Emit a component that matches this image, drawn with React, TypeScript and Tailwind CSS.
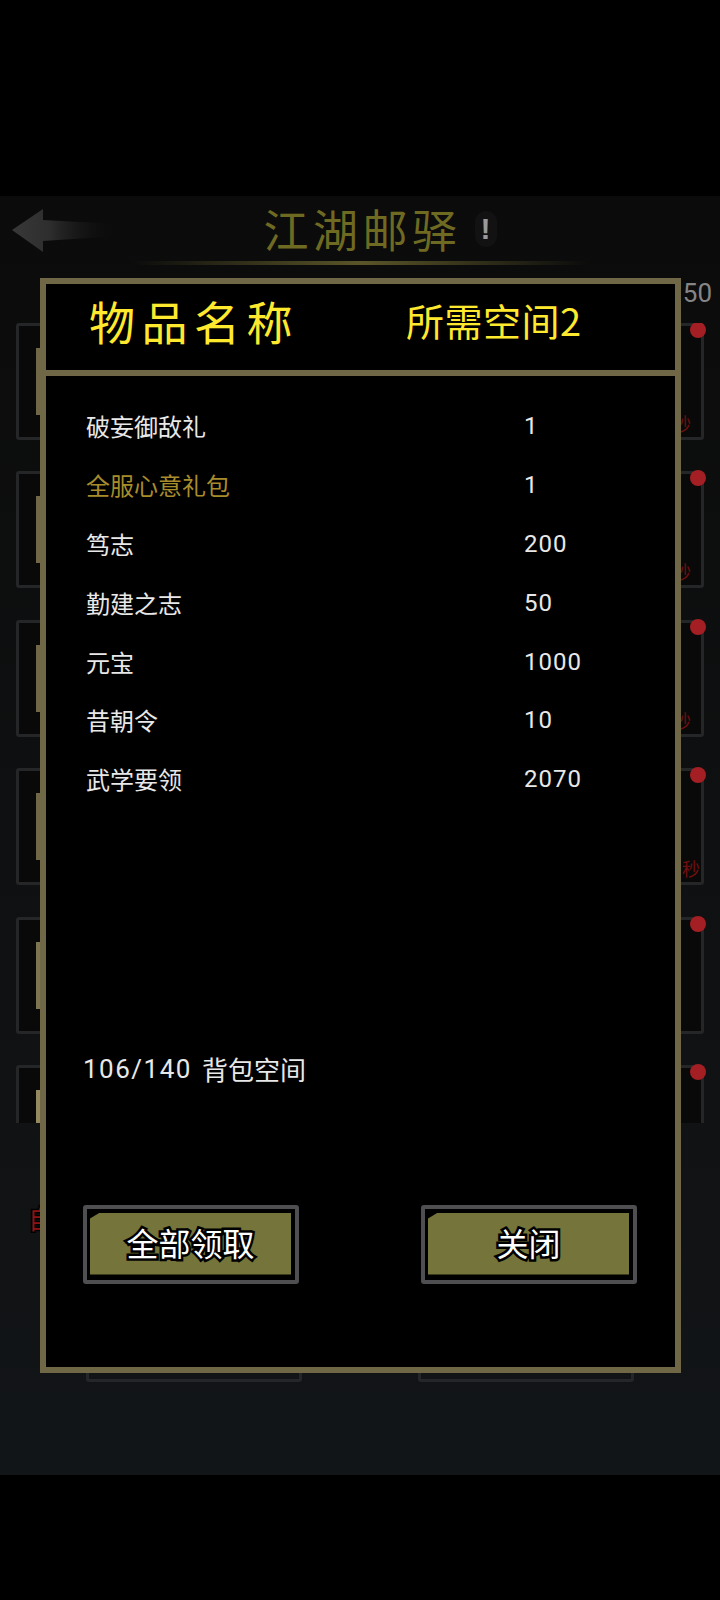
const items: [string, string, boolean][] = [
  ["破妄御敌礼", "1", false],
  ["全服心意礼包", "1", true],
  ["笃志", "200", false],
  ["勤建之志", "50", false],
  ["元宝", "1000", false],
  ["昔朝令", "10", false],
  ["武学要领", "2070", false],
];

const cards: { timer: string; pad: string; bar: string }[] = [
  { timer: "秒", pad: "pr-[10px]", bar: "bg-[#6f6745]" },
  { timer: "秒", pad: "pr-[10px]", bar: "bg-[#6f6745]" },
  { timer: "秒", pad: "pr-[10px]", bar: "bg-[#6f6745]" },
  { timer: "秒", pad: "pr-[1px]", bar: "bg-[#6f6745]" },
  { timer: "", pad: "", bar: "bg-[#7d7552]" },
  { timer: "", pad: "", bar: "bg-[#94895f]" },
];

function ModalButton({ label }: { label: string }) {
  return (
    <button className="w-[216px] h-[79px] bg-black border-4 border-[#4f4f52] rounded-[3px] pl-[3px] pr-[4px] pt-[4px] pb-[5px]">
      <span className="flex items-center justify-center w-full h-full bg-[#75743a] [clip-path:polygon(10px_0,100%_0,100%_100%,0_100%,0_6px)]">
        <span className="text-[32px] leading-none -mt-[4px] text-white [-webkit-text-stroke:5px_#000] [paint-order:stroke_fill]">
          {label}
        </span>
      </span>
    </button>
  );
}

export default function App() {
  return (
    <div className="w-[720px] h-[1600px] bg-black flex flex-col font-['Noto_Sans_CJK_SC','Noto_Sans',sans-serif] overflow-hidden">
      <div className="h-[196px] shrink-0 bg-black" />

      <main className="relative h-[1279px] shrink-0 flex flex-col bg-gradient-to-b from-[#0b0b0b] to-[#121517]">
        <header className="h-[127px] shrink-0 relative flex flex-col">
          <div className="flex items-center justify-center h-[65px] relative">
            <svg
              viewBox="0 0 120 50"
              className="absolute left-[8px] top-[8px] w-[120px] h-[50px]"
            >
              <defs>
                <linearGradient id="arrowFill" x1="0" x2="1" y1="0" y2="0">
                  <stop offset="0" stopColor="#383838" />
                  <stop offset="0.35" stopColor="#2e2e2e" />
                  <stop offset="1" stopColor="#0b0b0b" stopOpacity="0" />
                </linearGradient>
              </defs>
              <path
                d="M4 26 L35 5 L35 16 L110 20 L110 32 L35 37 L35 48 Z"
                fill="url(#arrowFill)"
              />
            </svg>
            <h1 className="ml-[40px] text-[45px] leading-none tracking-[4.5px] font-normal text-[#6f6a22]">
              江湖邮驿
            </h1>
            <span className="ml-[13px] w-[22px] h-[36px] rounded-full bg-[#121212] flex items-center justify-center text-[30px] leading-none font-['Liberation_Sans',sans-serif] font-bold text-[#9a9a9a]">
              !
            </span>
          </div>
          <div className="ml-[133px] w-[455px] h-[4px] bg-gradient-to-r from-transparent via-[#5a5528] to-transparent" />
          <div className="flex justify-end pr-[8px] mt-[13px] text-[26px] leading-[30px] text-[#858585] font-['Roboto',sans-serif]">
            50
          </div>
        </header>

        <div className="h-[800px] shrink-0 overflow-hidden flex flex-col gap-[31.4px] pl-[16px] pr-[16px]">
          {cards.map((card, i) => (
            <div
              key={i}
              className="relative h-[117px] shrink-0 bg-[#090909] border-[3px] border-[#242628] rounded-[3px] flex items-center"
            >
              <div className={`ml-[17px] w-[6px] h-[67px] ${card.bar}`} />
              {card.timer && (
                <div
                  className={`absolute right-0 bottom-[2px] ${card.pad} text-[18px] leading-[24px] text-[#6f1010]`}
                >
                  {card.timer}
                </div>
              )}
              <div className="absolute -top-[4px] -right-[5px] w-[16px] h-[16px] rounded-full bg-[#a31f24]" />
            </div>
          ))}
        </div>

        <div className="absolute left-[28px] top-[1007px] text-[26px] leading-[30px] text-[#8c1414] [-webkit-text-stroke:3px_#000] [paint-order:stroke_fill]">
          自
        </div>

        <div className="flex justify-between pl-[86px] pr-[86px] mt-[189px]">
          <div className="w-[216px] h-[70px] border-[3px] border-[#242628] rounded-[3px]" />
          <div className="w-[216px] h-[70px] border-[3px] border-[#242628] rounded-[3px]" />
        </div>

        {/* modal */}
        <section className="absolute left-[40px] top-[82px] w-[641px] h-[1095px] bg-black border-[6px] border-[#6f6745] flex flex-col">
          <div className="h-[86px] shrink-0 flex items-center pl-[43px] text-[#ffe92e] font-normal">
            <div className="w-[317px] text-[46px] leading-none tracking-[6.5px] -mt-[14px]">物品名称</div>
            <div className="text-[38px] leading-none tracking-[0.5px] -mt-[14px]">所需空间2</div>
          </div>
          <div className="h-[6px] shrink-0 bg-[#6f6745]" />

          <div className="pt-[21px] pl-[40px] flex flex-col">
            {items.map(([name, value, gold]) => (
              <div
                key={name}
                className={`h-[58.8px] flex items-center text-[24px] leading-none ${gold ? "text-[#a88c2c]" : "text-[#e8e8e8]"}`}
              >
                <span className="w-[438px] shrink-0">{name}</span>
                <span className="text-[#e8e8e8] tracking-[1px] font-['Roboto',sans-serif]">{value}</span>
              </div>
            ))}
            <div className="mt-[242px] h-[36px] -ml-[3px] flex items-center text-[26px] leading-none text-[#e8e8e8]">
              <span className="font-['Roboto',sans-serif] tracking-[1.5px]">106/140</span>
              <span className="ml-[10px]">背包空间</span>
            </div>
          </div>

          <div className="mt-[118px] flex justify-between pl-[37px] pr-[38px]">
            <ModalButton label="全部领取" />
            <ModalButton label="关闭" />
          </div>
        </section>
      </main>

      <div className="flex-1 bg-black" />
    </div>
  );
}
